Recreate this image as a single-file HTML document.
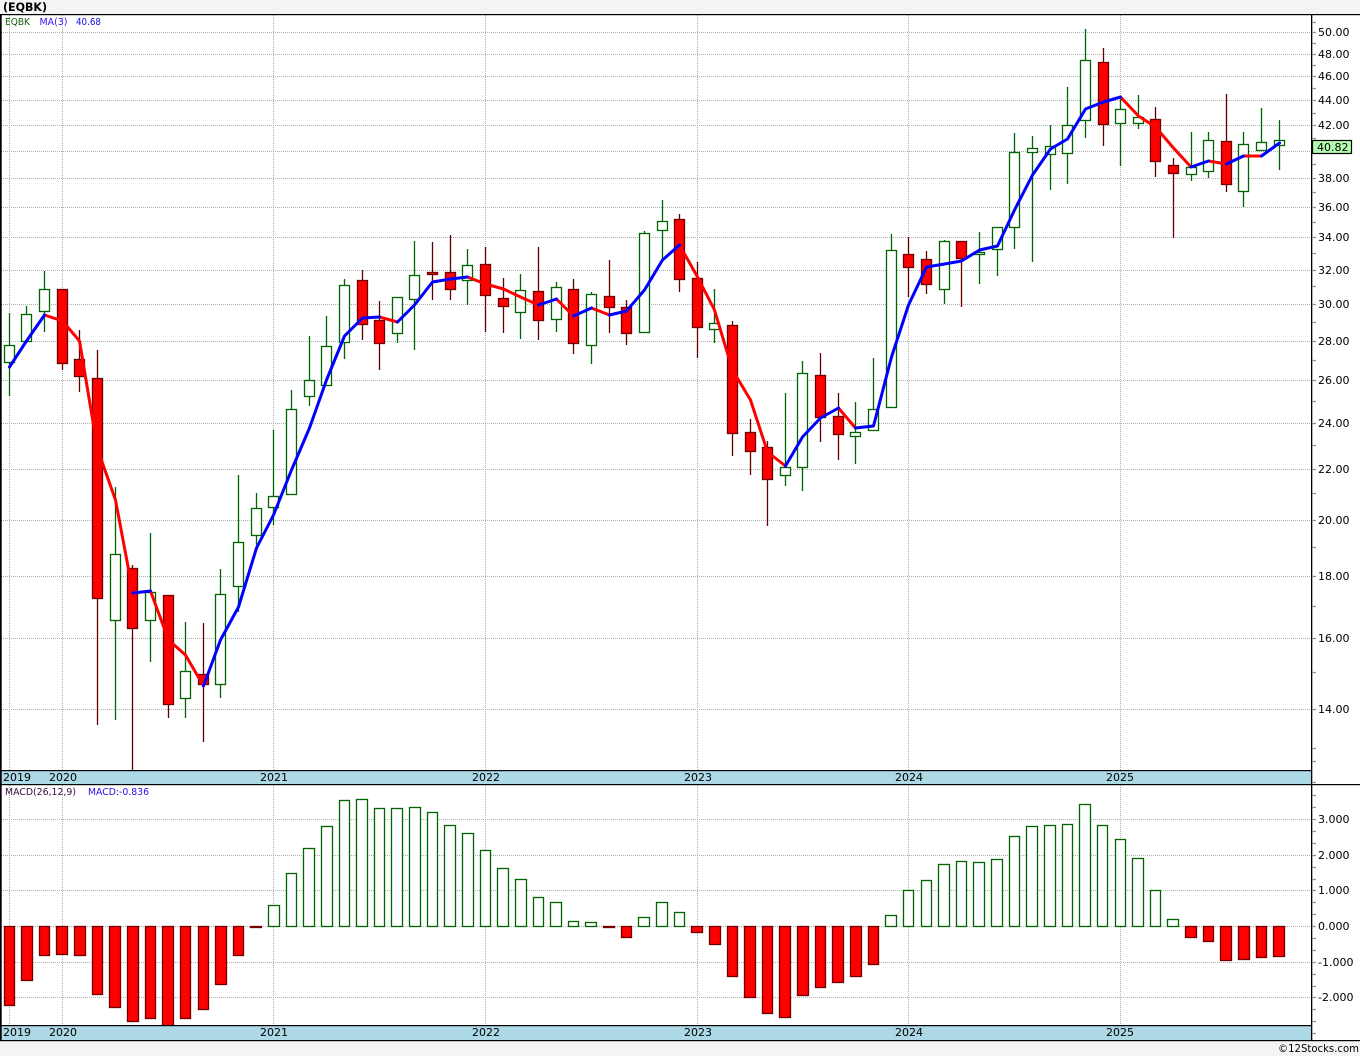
<!DOCTYPE html>
<html><head><meta charset="utf-8"><title>EQBK</title>
<style>
html,body{margin:0;padding:0;background:#f4f4f4;width:1360px;height:1056px;overflow:hidden}
svg{display:block}
text{font-family:"DejaVu Sans","Liberation Sans",sans-serif;font-size:11px;fill:#000}
.g rect{fill:#fff;stroke:#006400;stroke-width:1.3}
.r rect{fill:#f00;stroke:#700000;stroke-width:1.3}
.grid{stroke:#b0b0b0;stroke-width:1;stroke-dasharray:1 1;fill:none;shape-rendering:crispEdges}
.tick{stroke:#909090;stroke-width:1.2;fill:none}
.ma{fill:none;stroke-width:3;stroke-linejoin:round;stroke-linecap:round}
.leg{font-size:10px}
</style></head><body>
<svg width="1360" height="1056" viewBox="0 0 1360 1056" xmlns="http://www.w3.org/2000/svg">
<rect x="0" y="0" width="1360" height="1056" fill="#f4f4f4"/>
<rect x="0" y="14" width="1360" height="1026" fill="#fff"/>
<text x="3" y="11" style="font-weight:bold;font-size:11.5px" textLength="44" lengthAdjust="spacingAndGlyphs">(EQBK)</text>

<path class="grid" d="M1 32.5H1311M1 54.5H1311M1 76.5H1311M1 100.5H1311M1 125.5H1311M1 151.5H1311M1 178.5H1311M1 207.5H1311M1 237.5H1311M1 270.5H1311M1 304.5H1311M1 341.5H1311M1 380.5H1311M1 423.5H1311M1 469.5H1311M1 520.5H1311M1 576.5H1311M1 638.5H1311M1 709.5H1311"/>
<path class="grid" d="M9.5 15V770M62.5 15V770M273.5 15V770M485.5 15V770M697.5 15V770M908.5 15V770M1120.5 15V770"/>
<path class="grid" d="M1 819.5H1311M1 855.5H1311M1 890.5H1311M1 926.5H1311M1 962.5H1311M1 997.5H1311"/>
<path class="grid" d="M9.5 785V1025M62.5 785V1025M273.5 785V1025M485.5 785V1025M697.5 785V1025M908.5 785V1025M1120.5 785V1025"/>

<path fill="none" stroke="#006400" stroke-width="1.3" d="M9.5 313V396M26.5 306V341M44.5 271V332M115.5 487V720M150.5 533V662M185.5 622V718M220.5 569V698M238.5 475V612M256.5 493V545M273.5 430V525M291.5 390V494M309.5 336V406M326.5 316V385M344.5 279V359M397.5 309V343M414.5 241V350M467.5 249V305M520.5 274V339M556.5 282V332M591.5 292V364M644.5 231V332M662.5 200V260M714.5 289V343M785.5 393V486M802.5 361V491M855.5 402V464M873.5 358V430M891.5 234V407M944.5 240V304M979.5 232V284M997.5 228V276M1014.5 133V249M1032.5 136V262M1050.5 125V190M1067.5 87V184M1085.5 29V138M1120.5 97V166M1138.5 95V129M1191.5 132V181M1208.5 132V178M1243.5 132V207M1261.5 108V150M1279.5 120V170"/>
<path fill="none" stroke="#600000" stroke-width="1.3" d="M62.5 289V370M79.5 330V392M97.5 350V725M132.5 565V770M168.5 595V718M203.5 623V742M362.5 270V340M379.5 301V370M432.5 242V300M450.5 235V300M485.5 247V332M503.5 278V333M538.5 247V340M573.5 279V354M609.5 260V333M626.5 300V345M679.5 214V292M697.5 262V358M732.5 321V456M750.5 419V475M767.5 441V526M820.5 353V442M838.5 393V460M908.5 237V297M926.5 251V294M961.5 241V307M1103.5 48V146M1155.5 107V177M1173.5 158V238M1226.5 94V192"/>

<g class="g">
<rect x="4.5" y="345.5" width="10" height="17"/>
<rect x="21.5" y="314.5" width="10" height="27"/>
<rect x="39.5" y="289.5" width="10" height="22"/>
<rect x="110.5" y="554.5" width="10" height="66"/>
<rect x="145.5" y="592.5" width="10" height="28"/>
<rect x="180.5" y="671.5" width="10" height="27"/>
<rect x="215.5" y="594.5" width="10" height="90"/>
<rect x="233.5" y="542.5" width="10" height="44"/>
<rect x="251.5" y="508.5" width="10" height="27"/>
<rect x="268.5" y="496.5" width="10" height="11"/>
<rect x="286.5" y="409.5" width="10" height="85"/>
<rect x="304.5" y="380.5" width="10" height="16"/>
<rect x="321.5" y="346.5" width="10" height="39"/>
<rect x="339.5" y="285.5" width="10" height="57"/>
<rect x="392.5" y="297.5" width="10" height="36"/>
<rect x="409.5" y="275.5" width="10" height="24"/>
<rect x="462.5" y="265.5" width="10" height="15"/>
<rect x="515.5" y="290.5" width="10" height="22"/>
<rect x="551.5" y="287.5" width="10" height="32"/>
<rect x="586.5" y="294.5" width="10" height="51"/>
<rect x="639.5" y="233.5" width="10" height="99"/>
<rect x="657.5" y="221.5" width="10" height="9"/>
<rect x="709.5" y="323.5" width="10" height="6"/>
<rect x="780.5" y="467.5" width="10" height="8"/>
<rect x="797.5" y="373.5" width="10" height="94"/>
<rect x="850.5" y="432.5" width="10" height="4"/>
<rect x="868.5" y="409.5" width="10" height="21"/>
<rect x="886.5" y="250.5" width="10" height="157"/>
<rect x="939.5" y="241.5" width="10" height="48"/>
<rect x="974.5" y="252.5" width="10" height="2"/>
<rect x="992.5" y="227.5" width="10" height="22"/>
<rect x="1009.5" y="152.5" width="10" height="75"/>
<rect x="1027.5" y="148.5" width="10" height="4"/>
<rect x="1045.5" y="146.5" width="10" height="8"/>
<rect x="1062.5" y="125.5" width="10" height="28"/>
<rect x="1080.5" y="60.5" width="10" height="60"/>
<rect x="1115.5" y="109.5" width="10" height="14"/>
<rect x="1133.5" y="117.5" width="10" height="6"/>
<rect x="1186.5" y="167.5" width="10" height="7"/>
<rect x="1203.5" y="140.5" width="10" height="31"/>
<rect x="1238.5" y="144.5" width="10" height="47"/>
<rect x="1256.5" y="142.5" width="10" height="8"/>
<rect x="1274.5" y="140.5" width="10" height="5"/>
</g>
<g class="r">
<rect x="57.5" y="289.5" width="10" height="74"/>
<rect x="74.5" y="359.5" width="10" height="17"/>
<rect x="92.5" y="378.5" width="10" height="220"/>
<rect x="127.5" y="568.5" width="10" height="60"/>
<rect x="163.5" y="595.5" width="10" height="109"/>
<rect x="198.5" y="674.5" width="10" height="10"/>
<rect x="357.5" y="280.5" width="10" height="44"/>
<rect x="374.5" y="320.5" width="10" height="23"/>
<rect x="427.5" y="272.5" width="10" height="2"/>
<rect x="445.5" y="272.5" width="10" height="17"/>
<rect x="480.5" y="264.5" width="10" height="31"/>
<rect x="498.5" y="298.5" width="10" height="8"/>
<rect x="533.5" y="291.5" width="10" height="29"/>
<rect x="568.5" y="289.5" width="10" height="54"/>
<rect x="604.5" y="296.5" width="10" height="11"/>
<rect x="621.5" y="307.5" width="10" height="26"/>
<rect x="674.5" y="219.5" width="10" height="60"/>
<rect x="692.5" y="278.5" width="10" height="49"/>
<rect x="727.5" y="325.5" width="10" height="108"/>
<rect x="745.5" y="432.5" width="10" height="19"/>
<rect x="762.5" y="447.5" width="10" height="32"/>
<rect x="815.5" y="375.5" width="10" height="42"/>
<rect x="833.5" y="416.5" width="10" height="18"/>
<rect x="903.5" y="254.5" width="10" height="13"/>
<rect x="921.5" y="259.5" width="10" height="25"/>
<rect x="956.5" y="241.5" width="10" height="17"/>
<rect x="1098.5" y="62.5" width="10" height="62"/>
<rect x="1150.5" y="119.5" width="10" height="42"/>
<rect x="1168.5" y="165.5" width="10" height="8"/>
<rect x="1221.5" y="141.5" width="10" height="43"/>
</g>

<path class="ma" stroke="#ff0000" d="M44.5 315L62.5 321L79.5 341L97.5 449L115.5 500L133 593M150.5 591L168.5 640L185.5 655L203.5 686M379.5 317L397.5 322M467.5 277L485.5 284L503.5 289L520.5 297L538.5 305M556.5 299L573.5 316M591.5 308L609.5 315M679.5 245L697.5 277L714.5 310L732.5 370L750.5 400L767.5 452L785.5 466M838.5 408L855.5 428M1120.5 97L1138.5 116L1155.5 127L1173.5 148L1191 167M1208.5 161L1226.5 164M1243.5 156L1261.5 156"/>
<path class="ma" stroke="#0000ff" d="M9.5 367L26.5 341L44.5 315M133 593L150.5 591M203.5 686L220.5 640L238.5 607L256.5 548L273.5 515L291.5 470L309.5 428L326.5 380L344.5 336L362.5 318L379.5 317M397.5 322L414.5 305L432.5 282L450.5 279L467.5 277M538.5 305L556.5 299M573.5 316L591.5 308M609.5 315L626.5 311L644.5 290L662.5 260L679.5 245M785.5 466L802.5 437L820.5 418L838.5 408M855.5 428L873.5 426L891.5 357L908.5 305L926.5 267L944.5 264L961.5 261L979.5 250L997.5 246L1014.5 210L1032.5 175L1050.5 149L1067.5 139L1085.5 109L1103.5 102L1120.5 97M1191 167L1208.5 161M1226.5 164L1243.5 156M1261.5 156L1279.5 143"/>

<g class="g">
<rect x="268.5" y="905.5" width="11" height="21"/>
<rect x="286.5" y="873.5" width="10" height="53"/>
<rect x="303.5" y="848.5" width="11" height="78"/>
<rect x="321.5" y="826.5" width="11" height="100"/>
<rect x="339.5" y="800.5" width="10" height="126"/>
<rect x="356.5" y="799.5" width="11" height="127"/>
<rect x="374.5" y="808.5" width="10" height="118"/>
<rect x="391.5" y="808.5" width="11" height="118"/>
<rect x="409.5" y="807.5" width="11" height="119"/>
<rect x="427.5" y="812.5" width="10" height="114"/>
<rect x="444.5" y="825.5" width="11" height="101"/>
<rect x="462.5" y="833.5" width="11" height="93"/>
<rect x="480.5" y="850.5" width="10" height="76"/>
<rect x="497.5" y="868.5" width="11" height="58"/>
<rect x="515.5" y="879.5" width="11" height="47"/>
<rect x="533.5" y="897.5" width="10" height="29"/>
<rect x="550.5" y="902.5" width="11" height="24"/>
<rect x="568.5" y="921.5" width="10" height="5"/>
<rect x="585.5" y="922.5" width="11" height="4"/>
<rect x="638.5" y="917.5" width="11" height="9"/>
<rect x="656.5" y="902.5" width="11" height="24"/>
<rect x="674.5" y="912.5" width="10" height="14"/>
<rect x="885.5" y="915.5" width="11" height="11"/>
<rect x="903.5" y="890.5" width="10" height="36"/>
<rect x="921.5" y="880.5" width="10" height="46"/>
<rect x="938.5" y="864.5" width="11" height="62"/>
<rect x="956.5" y="861.5" width="10" height="65"/>
<rect x="973.5" y="862.5" width="11" height="64"/>
<rect x="991.5" y="859.5" width="11" height="67"/>
<rect x="1009.5" y="836.5" width="10" height="90"/>
<rect x="1026.5" y="826.5" width="11" height="100"/>
<rect x="1044.5" y="825.5" width="11" height="101"/>
<rect x="1062.5" y="824.5" width="10" height="102"/>
<rect x="1079.5" y="804.5" width="11" height="122"/>
<rect x="1097.5" y="825.5" width="10" height="101"/>
<rect x="1115.5" y="839.5" width="10" height="87"/>
<rect x="1132.5" y="858.5" width="11" height="68"/>
<rect x="1150.5" y="890.5" width="10" height="36"/>
<rect x="1167.5" y="919.5" width="11" height="7"/>
</g>
<g class="r">
<rect x="4.5" y="926.5" width="10" height="79"/>
<rect x="21.5" y="926.5" width="11" height="54"/>
<rect x="39.5" y="926.5" width="10" height="29"/>
<rect x="56.5" y="926.5" width="11" height="28"/>
<rect x="74.5" y="926.5" width="11" height="29"/>
<rect x="92.5" y="926.5" width="10" height="68"/>
<rect x="109.5" y="926.5" width="11" height="81"/>
<rect x="127.5" y="926.5" width="11" height="95"/>
<rect x="145.5" y="926.5" width="10" height="92"/>
<rect x="162.5" y="926.5" width="11" height="99"/>
<rect x="180.5" y="926.5" width="10" height="92"/>
<rect x="198.5" y="926.5" width="10" height="83"/>
<rect x="215.5" y="926.5" width="11" height="58"/>
<rect x="233.5" y="926.5" width="10" height="29"/>
<rect x="250.5" y="926.5" width="11" height="1"/>
<rect x="603.5" y="926.5" width="11" height="1"/>
<rect x="621.5" y="926.5" width="10" height="11"/>
<rect x="691.5" y="926.5" width="11" height="6"/>
<rect x="709.5" y="926.5" width="11" height="18"/>
<rect x="727.5" y="926.5" width="10" height="50"/>
<rect x="744.5" y="926.5" width="11" height="71"/>
<rect x="762.5" y="926.5" width="10" height="87"/>
<rect x="779.5" y="926.5" width="11" height="91"/>
<rect x="797.5" y="926.5" width="11" height="69"/>
<rect x="815.5" y="926.5" width="10" height="61"/>
<rect x="832.5" y="926.5" width="11" height="56"/>
<rect x="850.5" y="926.5" width="11" height="50"/>
<rect x="868.5" y="926.5" width="10" height="38"/>
<rect x="1185.5" y="926.5" width="11" height="11"/>
<rect x="1203.5" y="926.5" width="10" height="15"/>
<rect x="1220.5" y="926.5" width="11" height="34"/>
<rect x="1238.5" y="926.5" width="11" height="33"/>
<rect x="1256.5" y="926.5" width="10" height="31"/>
<rect x="1273.5" y="926.5" width="11" height="30"/>
</g>

<text class="leg" x="5" y="25" style="fill:#1a5a10" textLength="25" lengthAdjust="spacingAndGlyphs">EQBK</text>
<text class="leg" x="39.5" y="25" style="fill:#3a10f0" textLength="28" lengthAdjust="spacingAndGlyphs">MA(3)</text>
<text class="leg" x="76" y="25" style="fill:#1010e8" textLength="25" lengthAdjust="spacingAndGlyphs">40.68</text>
<text class="leg" x="5" y="795" style="fill:#3a0a40" textLength="71" lengthAdjust="spacingAndGlyphs">MACD(26,12,9)</text>
<text class="leg" x="88" y="795" style="fill:#2a10e8" textLength="61" lengthAdjust="spacingAndGlyphs">MACD:-0.836</text>

<rect x="1" y="771" width="1310" height="13" fill="#add8e6"/>
<rect x="1" y="1026" width="1310" height="14" fill="#add8e6"/>
<rect x="0" y="14" width="1360" height="1.2" fill="#000"/>
<rect x="0" y="770" width="1311" height="1.2" fill="#000"/>
<rect x="0" y="784" width="1360" height="1.2" fill="#000"/>
<rect x="0" y="1025" width="1311" height="1.2" fill="#000"/>
<rect x="0" y="1040" width="1360" height="1.2" fill="#000"/>
<rect x="0" y="14" width="1.7" height="1027" fill="#000"/>
<rect x="1311" y="14" width="1.3" height="1027" fill="#000"/>

<path class="tick" d="M1312 22.5h4M1312 32.5h4M1312 43.5h4M1312 54.5h4M1312 65.5h4M1312 76.5h4M1312 88.5h4M1312 100.5h4M1312 113.5h4M1312 125.5h4M1312 138.5h4M1312 151.5h4M1312 164.5h4M1312 178.5h4M1312 192.5h4M1312 207.5h4M1312 222.5h4M1312 237.5h4M1312 253.5h4M1312 270.5h4M1312 286.5h4M1312 304.5h4M1312 322.5h4M1312 341.5h4M1312 360.5h4M1312 380.5h4M1312 401.5h4M1312 423.5h4M1312 445.5h4M1312 469.5h4M1312 493.5h4M1312 520.5h4M1312 547.5h4M1312 576.5h4M1312 606.5h4M1312 638.5h4M1312 672.5h4M1312 709.5h4M1312 748.5h4M1312 761.5h4M1312 782.5h4"/>
<path class="tick" d="M1312 795.5h4M1312 807.5h4M1312 819.5h4M1312 831.5h4M1312 843.5h4M1312 855.5h4M1312 867.5h4M1312 879.5h4M1312 890.5h4M1312 902.5h4M1312 914.5h4M1312 926.5h4M1312 938.5h4M1312 950.5h4M1312 962.5h4M1312 974.5h4M1312 986.5h4M1312 997.5h4M1312 1009.5h4M1312 1021.5h4M1312 1033.5h4"/>

<text x="1318" y="36">50.00</text>
<text x="1318" y="58">48.00</text>
<text x="1318" y="80">46.00</text>
<text x="1318" y="104">44.00</text>
<text x="1318" y="129">42.00</text>
<text x="1318" y="182">38.00</text>
<text x="1318" y="211">36.00</text>
<text x="1318" y="241">34.00</text>
<text x="1318" y="274">32.00</text>
<text x="1318" y="308">30.00</text>
<text x="1318" y="345">28.00</text>
<text x="1318" y="384">26.00</text>
<text x="1318" y="427">24.00</text>
<text x="1318" y="473">22.00</text>
<text x="1318" y="524">20.00</text>
<text x="1318" y="580">18.00</text>
<text x="1318" y="642">16.00</text>
<text x="1318" y="713">14.00</text>
<rect x="1312.5" y="140.5" width="39" height="13" fill="#b4fab0" stroke="#000" stroke-width="1.2"/>
<text x="1317" y="151">40.82</text>

<text x="1318" y="823">3.000</text>
<text x="1318" y="859">2.000</text>
<text x="1318" y="894">1.000</text>
<text x="1318" y="930">0.000</text>
<text x="1318" y="966">-1.000</text>
<text x="1318" y="1001">-2.000</text>

<text x="3" y="781">2019</text><text x="49" y="781">2020</text><text x="260" y="781">2021</text><text x="472" y="781">2022</text><text x="684" y="781">2023</text><text x="895" y="781">2024</text><text x="1106" y="781">2025</text>
<text x="3" y="1036">2019</text><text x="49" y="1036">2020</text><text x="260" y="1036">2021</text><text x="472" y="1036">2022</text><text x="684" y="1036">2023</text><text x="895" y="1036">2024</text><text x="1106" y="1036">2025</text>

<text x="1278" y="1052" textLength="81" lengthAdjust="spacingAndGlyphs">©12Stocks.com</text>
</svg>
</body></html>
